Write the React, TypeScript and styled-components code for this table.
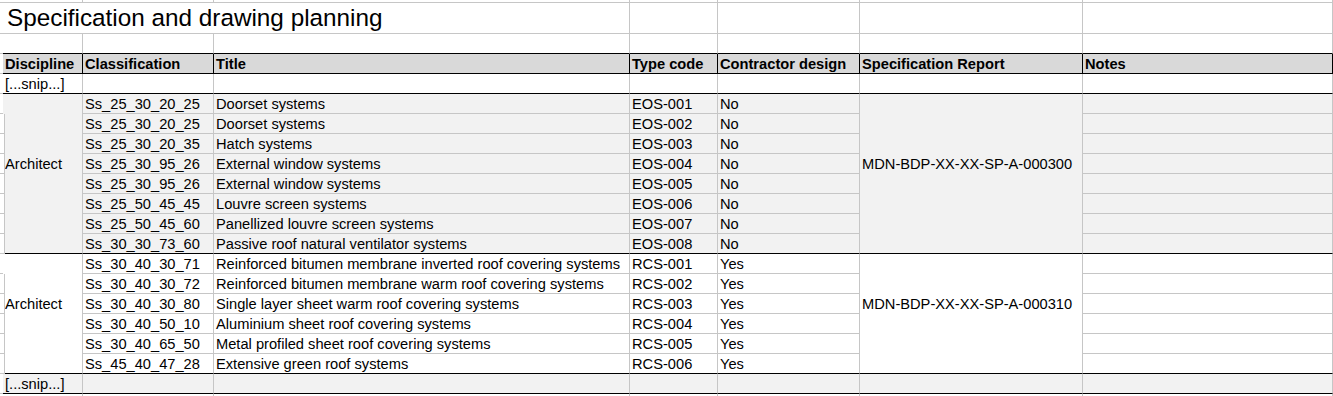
import { Fragment } from 'react'
import styled, { createGlobalStyle } from 'styled-components'

const GRID = '#c6c6c6'
const HEAD_BG = '#d9d9d9'
const SHADE = '#f2f2f2'

const GlobalStyle = createGlobalStyle`
  html, body {
    margin: 0;
    padding: 0;
    background: #fff;
  }
  body {
    font-family: 'Liberation Sans', Arial, sans-serif;
    color: #000;
  }
`

const Sheet = styled.div`
  display: grid;
  grid-template-columns: 3px 80px 131px 416px 88px 142px 223px 250px;
  grid-template-rows: 3px 31px repeat(18, 20px) 3px;
  width: 1333px;
  height: 396px;
  overflow: hidden;
  font-size: 14.67px;
`

const Cell = styled.div<{ $bottom?: boolean; $right?: boolean; $bg?: string }>`
  box-sizing: border-box;
  border-right: 1px solid ${(p) => (p.$right ? '#000' : GRID)};
  border-bottom: 1px solid ${(p) => (p.$bottom ? '#000' : GRID)};
  background: ${(p) => p.$bg ?? '#fff'};
  padding: 1px 2px 0;
  line-height: 19px;
  white-space: nowrap;
`

const TitleCell = styled(Cell)`
  grid-column: span 3;
  font-size: 24.3px;
  line-height: 30px;
  padding: 0 4px;
`

const HeadCell = styled(Cell)`
  font-weight: bold;
  background: ${HEAD_BG};
`

// merged cell that covers every row of a group (Discipline, Specification Report)
const MergedCell = styled(Cell)<{ $span: number }>`
  grid-row: span ${(p) => p.$span};
  display: flex;
  align-items: center;
  padding: 0 2px 19px;
`

type Item = { code: string; title: string; type: string; contractor: string }
type Group = { discipline: string; report: string; shaded: boolean; items: Item[] }

const headers = [
  'Discipline',
  'Classification',
  'Title',
  'Type code',
  'Contractor design',
  'Specification Report',
  'Notes',
]

const groups: Group[] = [
  {
    discipline: 'Architect',
    report: 'MDN-BDP-XX-XX-SP-A-000300',
    shaded: true,
    items: [
      { code: 'Ss_25_30_20_25', title: 'Doorset systems', type: 'EOS-001', contractor: 'No' },
      { code: 'Ss_25_30_20_25', title: 'Doorset systems', type: 'EOS-002', contractor: 'No' },
      { code: 'Ss_25_30_20_35', title: 'Hatch systems', type: 'EOS-003', contractor: 'No' },
      { code: 'Ss_25_30_95_26', title: 'External window systems', type: 'EOS-004', contractor: 'No' },
      { code: 'Ss_25_30_95_26', title: 'External window systems', type: 'EOS-005', contractor: 'No' },
      { code: 'Ss_25_50_45_45', title: 'Louvre screen systems', type: 'EOS-006', contractor: 'No' },
      { code: 'Ss_25_50_45_60', title: 'Panellized louvre screen systems', type: 'EOS-007', contractor: 'No' },
      { code: 'Ss_30_30_73_60', title: 'Passive roof natural ventilator systems', type: 'EOS-008', contractor: 'No' },
    ],
  },
  {
    discipline: 'Architect',
    report: 'MDN-BDP-XX-XX-SP-A-000310',
    shaded: false,
    items: [
      { code: 'Ss_30_40_30_71', title: 'Reinforced bitumen membrane inverted roof covering systems', type: 'RCS-001', contractor: 'Yes' },
      { code: 'Ss_30_40_30_72', title: 'Reinforced bitumen membrane warm roof covering systems', type: 'RCS-002', contractor: 'Yes' },
      { code: 'Ss_30_40_30_80', title: 'Single layer sheet warm roof covering systems', type: 'RCS-003', contractor: 'Yes' },
      { code: 'Ss_30_40_50_10', title: 'Aluminium sheet roof covering systems', type: 'RCS-004', contractor: 'Yes' },
      { code: 'Ss_30_40_65_50', title: 'Metal profiled sheet roof covering systems', type: 'RCS-005', contractor: 'Yes' },
      { code: 'Ss_45_40_47_28', title: 'Extensive green roof systems', type: 'RCS-006', contractor: 'Yes' },
    ],
  },
]

// a plain row of 8 grid cells (first one is the cropped column on the left)
function PlainRow({ bottom, bg, first }: { bottom?: boolean; bg?: string; first?: string }) {
  return (
    <>
      <Cell />
      {Array.from({ length: 7 }).map((_, i) => (
        <Cell key={i} $bottom={bottom} $bg={bg}>
          {i === 0 ? first : null}
        </Cell>
      ))}
    </>
  )
}

function GroupRows({ group }: { group: Group }) {
  const bg = group.shaded ? SHADE : '#fff'
  const last = group.items.length - 1
  return (
    <>
      {group.items.map((item, i) => {
        const edge = i === last
        return (
          <Fragment key={i}>
            <Cell />
            {i === 0 && (
              <MergedCell $span={group.items.length} $bottom $bg={bg}>
                {group.discipline}
              </MergedCell>
            )}
            <Cell $bottom={edge} $bg={bg}>{item.code}</Cell>
            <Cell $bottom={edge} $bg={bg}>{item.title}</Cell>
            <Cell $bottom={edge} $bg={bg}>{item.type}</Cell>
            <Cell $bottom={edge} $bg={bg}>{item.contractor}</Cell>
            {i === 0 && (
              <MergedCell $span={group.items.length} $bottom $bg={bg}>
                {group.report}
              </MergedCell>
            )}
            <Cell $bottom={edge} $bg={bg} />
          </Fragment>
        )
      })}
    </>
  )
}

export default function App() {
  return (
    <>
      <GlobalStyle />
      <Sheet>
        {/* cropped row above the title */}
        <PlainRow />

        {/* title row */}
        <Cell />
        <TitleCell>Specification and drawing planning</TitleCell>
        <Cell />
        <Cell />
        <Cell />
        <Cell />

        {/* spacer row, its bottom edge is the header's top border */}
        <PlainRow bottom />

        <Cell $right />
        {headers.map((h) => (
          <HeadCell key={h} $bottom $right>
            {h}
          </HeadCell>
        ))}

        <PlainRow bottom first="[...snip...]" />

        {groups.map((g, i) => (
          <GroupRows key={i} group={g} />
        ))}

        <PlainRow bottom bg={SHADE} first="[...snip...]" />

        {/* cropped row below */}
        <PlainRow />
      </Sheet>
    </>
  )
}
